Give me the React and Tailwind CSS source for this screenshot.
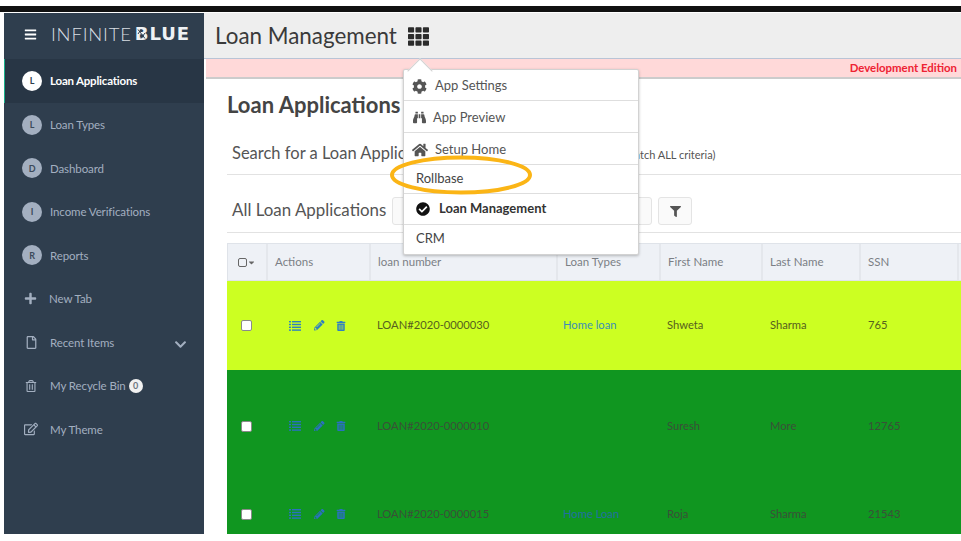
import React from 'react';
import {
  FaBars, FaTh, FaCog, FaBinoculars, FaHome, FaCheckCircle, FaPlus, FaRegFile,
  FaRegTrashAlt, FaRegEdit, FaChevronDown, FaPencilAlt, FaTrashAlt, FaFilter, FaCaretDown,
} from 'react-icons/fa';

const navItems = [
  { letter: 'L', label: 'Loan Applications', active: true },
  { letter: 'L', label: 'Loan Types' },
  { letter: 'D', label: 'Dashboard' },
  { letter: 'I', label: 'Income Verifications' },
  { letter: 'R', label: 'Reports' },
];

const columns = [
  { label: 'Actions', w: 'w-[103px]' },
  { label: 'loan number', w: 'w-[187px]' },
  { label: 'Loan Types', w: 'w-[103px]' },
  { label: 'First Name', w: 'w-[102px]' },
  { label: 'Last Name', w: 'w-[98px]' },
  { label: 'SSN', w: 'w-[98px]' },
];

const rows = [
  { h: 'h-[89px]', bg: 'bg-[#ccff22]', text: 'text-[#56601f]', link: 'text-[#3a8fb5]', icon: 'text-[#2f80c0]', id: 'LOAN#2020-0000030', type: 'Home loan', first: 'Shweta', last: 'Sharma', ssn: '765' },
  { h: 'h-[112px]', bg: 'bg-[#109620]', text: 'text-[#3a5038]', link: 'text-[#2070a0]', icon: 'text-[#2a70c0]', id: 'LOAN#2020-0000010', type: '', first: 'Suresh', last: 'More', ssn: '12765' },
  { h: 'h-[64px]', bg: 'bg-[#109620]', text: 'text-[#3a5038]', link: 'text-[#2070a0]', icon: 'text-[#2a70c0]', id: 'LOAN#2020-0000015', type: 'Home Loan', first: 'Roja', last: 'Sharma', ssn: '21543' },
];

// FA4 style list icon, four rows of bullet + line
const ListIcon = () => (
  <svg width="12" height="10" viewBox="0 0 12 10" fill="currentColor">
    {[0, 2.8, 5.6, 8.4].map((y) => (
      <g key={y}>
        <rect x="0" y={y} width="2" height="1.4" />
        <rect x="3" y={y} width="9" height="1.4" />
      </g>
    ))}
  </svg>
);

const SideLink = ({ icon, children, trailing, wide = true }) => (
  <div className="h-[43.5px] flex items-center text-[11.5px] text-[#a3afc0] tracking-[-0.1px]">
    <span className={`${wide ? 'w-[46px]' : 'w-[45px]'} flex justify-center pl-[8px] text-[13px] shrink-0`}>{icon}</span>
    <span className="flex-1 flex items-center">{children}</span>
    {trailing}
  </div>
);

const MenuRow = ({ className, children }) => (
  <div className={`flex items-center border-b border-[#dedede] last:border-b-0 ${className}`}>{children}</div>
);

export default function App() {
  return (
    <div className="relative w-[961px] h-[541px] overflow-hidden bg-white pt-[6px] pb-[7px] flex flex-col font-['Lato','Open_Sans',sans-serif]">
      <div className="h-[6px] bg-[#111111] shrink-0" />
      <div className="flex-1 flex min-h-0 pl-[4px] pt-[1px]">
        {/* Sidebar */}
        <aside className="w-[200px] shrink-0 bg-[#2f3e4e]">
          <div className="h-[46px] flex items-center pb-[4px]">
            <FaBars className="ml-[20px] text-[13px] text-white" />
            <span className="ml-[14px] text-[18.5px] font-light tracking-[0.8px] text-[#d8dde3] leading-none">INFINITE</span>
            <span className="relative ml-[3px] text-[18px] font-bold text-[#eef1f4] tracking-[1px] leading-none font-['DejaVu_Sans',sans-serif]">
              BLUE
              <svg className="absolute left-[1px] top-[3px]" width="12" height="12" viewBox="0 0 12 12" fill="none" stroke="#2f3e4e" strokeWidth="1">
                <path d="M2 1.5 L9 10.5 M5 1.5 L2 6 M5 10.5 L9 5" />
              </svg>
            </span>
          </div>
          {navItems.map((item) => (
            <div
              key={item.label}
              className={`flex items-center text-[11.5px] ${item.active ? 'h-[44px] tracking-[-0.2px] bg-[#283645] border-l border-[#18b08a] text-white font-bold' : 'h-[43.5px] tracking-[-0.1px] text-[#a3afc0]'}`}
            >
              <span className={`${item.active ? 'ml-[17px] bg-white text-[#2f3e4e]' : 'ml-[18px] bg-[#a3afc0] text-[#3c4a5a]'} w-[20px] h-[20px] rounded-full flex items-center justify-center text-[9px] font-bold`}>
                {item.letter}
              </span>
              <span className="ml-[8px]">{item.label}</span>
            </div>
          ))}
          <SideLink wide={false} icon={<FaPlus className="text-[13px]" />}>New Tab</SideLink>
          <SideLink
            icon={<FaRegFile />}
            trailing={<FaChevronDown className="mr-[17px] mt-[4px] text-[13px]" />}
          >
            Recent Items
          </SideLink>
          <SideLink icon={<FaRegTrashAlt className="text-[12px]" />}>
            My Recycle Bin
            <span className="ml-[3px] w-[14px] h-[14px] rounded-full bg-[#f1f1f1] text-[#6b7580] text-[9px] font-bold flex items-center justify-center">0</span>
          </SideLink>
          <SideLink icon={<FaRegEdit className="text-[14px]" />}>My Theme</SideLink>
        </aside>

        {/* Main */}
        <main className="flex-1 min-w-0 flex flex-col">
          <header className="h-[45px] shrink-0 bg-[#eeeeee] flex items-center pl-[11px] border-b border-[#b9c4d6] box-content">
            <h1 className="text-[22.4px] text-[#3a3a3a] leading-none mt-[2px]">Loan Management</h1>
            <FaTh className="ml-[11px] text-[21px] text-[#2b2b2b] mt-[2px]" />
          </header>
          <div className="h-[18px] shrink-0 bg-[#ffd9d9] border-b-2 border-[#cccccc] box-content ml-[2px] flex items-center justify-end pr-[4px] text-[11.4px] font-bold text-[#ee2233] leading-none">
            Development Edition
          </div>

          <div className="flex-1 min-h-0 overflow-hidden pt-[13px] pl-[23px]">
            <h2 className="text-[22px] font-bold text-[#444444] leading-[26px] mb-[24px]">Loan Applications</h2>
            <div className="h-[33px] border-b border-[#e2e2e2] flex items-start pl-[5px] text-[16.5px] text-[#555555] leading-[22px]">
              <span className="whitespace-nowrap">Search for a Loan Applications</span>
              <span className="ml-[172px] text-[11px] mt-[2px] whitespace-nowrap">(Match ALL criteria)</span>
            </div>
            <div className="h-[58px] border-b border-[#e2e2e2] flex items-start pt-[22px] pl-[5px]">
              <span className="text-[16.9px] leading-[26px] text-[#555555] whitespace-nowrap">All Loan Applications</span>
              <span className="ml-[6px] w-[260px] h-[28px] border border-[#e4e4e4] rounded-[3px] bg-[#fafafa]" />
              <span className="ml-[6px] w-[34px] h-[28px] border border-[#e4e4e4] rounded-[3px] bg-[#fafafa] flex items-center justify-center">
                <FaFilter className="text-[11px] text-[#555555]" />
              </span>
            </div>

            <div className="mt-[10px]">
              <div className="flex h-[38px] bg-[#eef1f6] border-y border-l border-[#dfe3e9] text-[11.5px] text-[#7b7f85]">
                <div className="w-[40px] shrink-0 flex items-center justify-center border-r-2 border-[#e4e7ec] text-[#666666]">
                  <span className="w-[9px] h-[9px] border border-[#666666] rounded-[2px]" />
                  <FaCaretDown className="text-[9px]" />
                </div>
                {columns.map((c) => (
                  <div key={c.label} className={`${c.w} shrink-0 flex items-center pl-[7px] border-r-2 border-[#e4e7ec]`}>{c.label}</div>
                ))}
              </div>
              {rows.map((r) => (
                <div key={r.id} className={`flex items-center ${r.h} ${r.bg} ${r.text} text-[11.2px]`}>
                  <div className="w-[40px] shrink-0 flex justify-center pr-[2px]">
                    <span className="w-[11px] h-[11px] bg-white border border-[#8a8a8a] rounded-[2px]" />
                  </div>
                  <div className={`w-[103px] shrink-0 flex items-center pl-[22px] ${r.icon}`}>
                    <ListIcon />
                    <FaPencilAlt className="ml-[13px] text-[10.5px]" />
                    <FaTrashAlt className="ml-[11px] text-[10px]" />
                  </div>
                  <div className="w-[187px] shrink-0 pl-[7px]">{r.id}</div>
                  <div className={`w-[103px] shrink-0 pl-[6px] ${r.link}`}>{r.type}</div>
                  <div className="w-[102px] shrink-0 pl-[7px]">{r.first}</div>
                  <div className="w-[98px] shrink-0 pl-[8px]">{r.last}</div>
                  <div className="w-[98px] shrink-0 pl-[8px]">{r.ssn}</div>
                </div>
              ))}
            </div>
          </div>
        </main>
      </div>

      {/* App menu dropdown */}
      <div className="absolute left-[403px] top-[69px] w-[236px] bg-white border border-[#d2d2d2] rounded-[2px] shadow-[0_1px_3px_rgba(0,0,0,0.25)] text-[13px] text-[#555555]">
        <div className="absolute -top-[8px] left-[7px] w-[18px] h-[18px] rotate-45 bg-white border-l border-t border-[#d2d2d2]" />
        <MenuRow className="relative h-[31px] pl-[8px] pt-[2px]"><FaCog className="text-[15px] mr-[8px]" />App Settings</MenuRow>
        <MenuRow className="h-[32px] pl-[9px] pt-[2px]"><FaBinoculars className="text-[13px] mr-[7px]" />App Preview</MenuRow>
        <MenuRow className="h-[32px] pl-[8px] pt-[2px]"><FaHome className="text-[16px] mr-[7px]" />Setup Home</MenuRow>
        <MenuRow className="h-[29px] pl-[12px] text-[#444444]">Rollbase</MenuRow>
        <MenuRow className="h-[31px] pl-[12px] font-bold text-[#333333]"><FaCheckCircle className="text-[14px] text-[#111111] mr-[9px]" />Loan Management</MenuRow>
        <MenuRow className="h-[29px] pl-[12px] pb-[2px] text-[#444444]">CRM</MenuRow>
      </div>

      {/* Hand-drawn highlight round Rollbase */}
      <svg className="absolute left-[386px] top-[150px]" width="150" height="50" viewBox="0 0 150 50" fill="none">
        <ellipse cx="75" cy="25" rx="69" ry="17.5" stroke="#fbb516" strokeWidth="4" />
      </svg>
    </div>
  );
}
